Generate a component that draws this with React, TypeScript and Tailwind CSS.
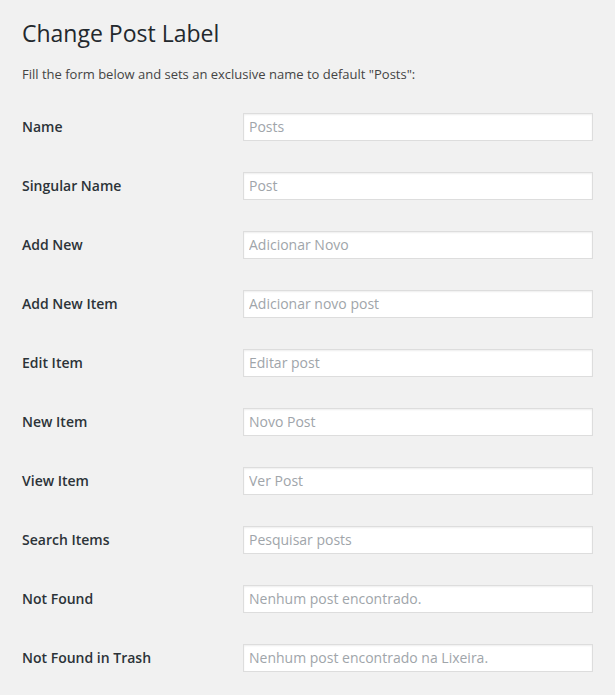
const FIELDS: { label: string; placeholder: string }[] = [
  { label: 'Name', placeholder: 'Posts' },
  { label: 'Singular Name', placeholder: 'Post' },
  { label: 'Add New', placeholder: 'Adicionar Novo' },
  { label: 'Add New Item', placeholder: 'Adicionar novo post' },
  { label: 'Edit Item', placeholder: 'Editar post' },
  { label: 'New Item', placeholder: 'Novo Post' },
  { label: 'View Item', placeholder: 'Ver Post' },
  { label: 'Search Items', placeholder: 'Pesquisar posts' },
  { label: 'Not Found', placeholder: 'Nenhum post encontrado.' },
  { label: 'Not Found in Trash', placeholder: 'Nenhum post encontrado na Lixeira.' },
];

export default function App() {
  return (
    <div className="min-h-[695px] bg-[#f1f1f1] px-[22px] font-['Open_Sans',sans-serif] text-[#23282d]">
      {/* Header */}
      <h1 className="pt-[19px] text-[23px] leading-[29px] font-normal">Change Post Label</h1>
      <p className="mt-[16px] text-[13px] leading-[20px] text-[#444]">
        Fill the form below and sets an exclusive name to default "Posts":
      </p>

      {/* Form rows */}
      <div className="mt-[13px] flex flex-col">
        {FIELDS.map((f) => (
          <div key={f.label} className="flex h-[59px] items-center">
            <label className="w-[221px] text-[14px] font-semibold text-[#2c3338]">{f.label}</label>
            <input
              type="text"
              placeholder={f.placeholder}
              className="h-[28px] w-[350px] border border-[#ddd] bg-white px-[5px] text-[14px] text-[#32373c] shadow-[inset_0_1px_2px_rgba(0,0,0,0.07)] outline-none placeholder:text-[#a0a5aa]"
            />
          </div>
        ))}
      </div>
    </div>
  );
}
